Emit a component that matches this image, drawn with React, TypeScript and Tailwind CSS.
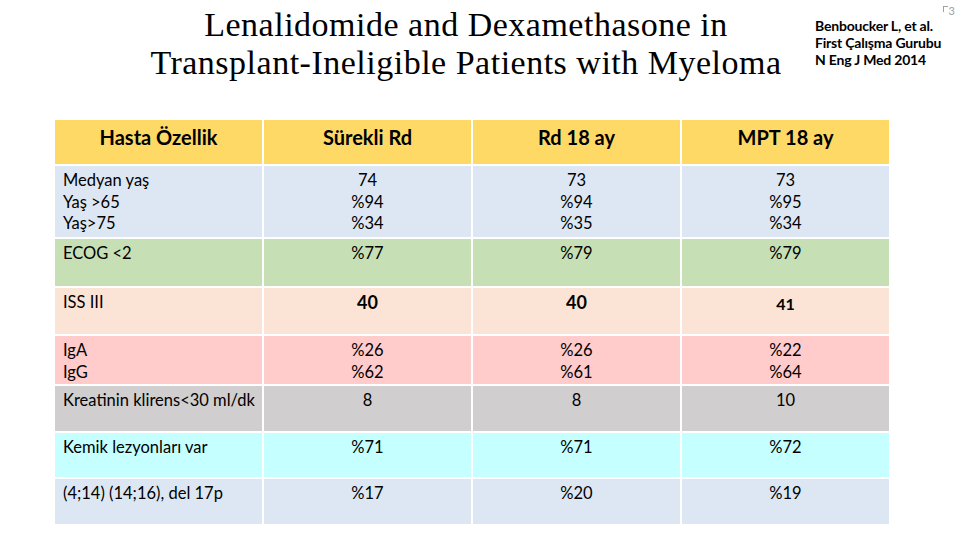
import React from "react";

type Row = {
  bg: string;
  h: string;
  label: React.ReactNode;
  vals: React.ReactNode[];
};

const body = { fontFamily: "Lato, 'Open Sans', sans-serif" };

export default function App() {
  const rows: Row[] = [
    {
      bg: "bg-[#dde7f3]",
      h: "h-[71px]",
      label: (
        <>
          <div>Medyan yaş</div>
          <div>Yaş &gt;65</div>
          <div>Yaş&gt;75</div>
        </>
      ),
      vals: [
        <><div>74</div><div>%94</div><div>%34</div></>,
        <><div>73</div><div>%94</div><div>%35</div></>,
        <><div>73</div><div>%95</div><div>%34</div></>,
      ],
    },
    {
      bg: "bg-[#c6dfb4]",
      h: "h-[47px]",
      label: <div>ECOG &lt;2</div>,
      vals: [<div>%77</div>, <div>%79</div>, <div>%79</div>],
    },
    {
      bg: "bg-[#fbe4d6]",
      h: "h-[46px]",
      label: <div>ISS III</div>,
      vals: [
        <div className="font-bold text-[18px] leading-[20px]">40</div>,
        <div className="font-bold text-[18px] leading-[20px]">40</div>,
        <div className="font-bold text-[16px] leading-[22px] pt-[1px]">41</div>,
      ],
    },
    {
      bg: "bg-[#ffcbcb]",
      h: "h-[48px]",
      label: (
        <>
          <div>IgA</div>
          <div>IgG</div>
        </>
      ),
      vals: [
        <><div>%26</div><div>%62</div></>,
        <><div>%26</div><div>%61</div></>,
        <><div>%22</div><div>%64</div></>,
      ],
    },
    {
      bg: "bg-[#d0cece]",
      h: "h-[45px]",
      label: <div>Kreatinin klirens&lt;30 ml/dk</div>,
      vals: [<div>8</div>, <div>8</div>, <div>10</div>],
    },
    {
      bg: "bg-[#c6ffff]",
      h: "h-[44px]",
      label: <div>Kemik lezyonları var</div>,
      vals: [<div>%71</div>, <div>%71</div>, <div>%72</div>],
    },
    {
      bg: "bg-[#dde7f3]",
      h: "h-[45px]",
      label: <div>(4;14) (14;16), del 17p</div>,
      vals: [<div>%17</div>, <div>%20</div>, <div>%19</div>],
    },
  ];

  return (
    <div className="w-[960px] h-[540px] bg-white overflow-hidden relative text-black" style={body}>
      <div className="absolute right-[5px] top-[5px] flex items-start text-[#a0a0a0] text-[11px] leading-[11px]">
        <span className="inline-block w-[5px] h-[6px] border-t border-l border-[#a0a0a0] mt-[1px] mr-[1px]" />
        <span>3</span>
      </div>
      <div className="flex h-[120px]">
        <div className="w-[140px]" />
        <div
          className="w-[652px] text-center text-[34px] leading-[38px] pt-[6px] tracking-[0.5px]"
          style={{ fontFamily: "'Liberation Serif', serif" }}
        >
          <div>Lenalidomide and Dexamethasone in</div>
          <div>Transplant-Ineligible Patients with Myeloma</div>
        </div>
        <div className="ml-[23px] pt-[17px] text-[14px] leading-[17px] font-bold tracking-[-0.2px]">
          <div>Benboucker L, et al.</div>
          <div>First Çalışma Gurubu</div>
          <div>N Eng J Med 2014</div>
        </div>
      </div>
      <div className="ml-[55px] w-[834px] grid grid-cols-4 gap-[2px]">
        {["Hasta Özellik", "Sürekli Rd", "Rd 18 ay", "MPT 18 ay"].map((t) => (
          <div
            key={t}
            className="h-[44px] bg-[#ffd966] text-center pt-[4px] leading-[26px] font-bold text-[20px]"
          >
            {t}
          </div>
        ))}
        {rows.map((r, i) => (
          <React.Fragment key={i}>
            <div className={`${r.bg} ${r.h} pl-[8px] pt-[4px] text-[16.5px] leading-[21.5px]`}>
              {r.label}
            </div>
            {r.vals.map((v, j) => (
              <div
                key={j}
                className={`${r.bg} ${r.h} pt-[4px] text-center text-[16.5px] leading-[21.5px]`}
              >
                {v}
              </div>
            ))}
          </React.Fragment>
        ))}
      </div>
    </div>
  );
}
